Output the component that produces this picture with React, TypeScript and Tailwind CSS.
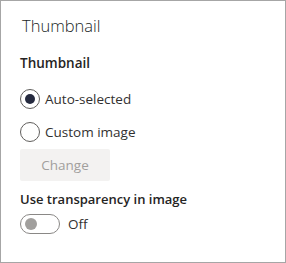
export default function App() {
  return (
    <div className="w-[286px] h-[263px] border border-[#a6a6a6] bg-white text-[#252423]" style={{ fontFamily: '"Open Sans", "Noto Sans", sans-serif' }}>
      <div className="flex flex-col pl-[19px]">
        <div className="h-[22px] mt-[14px] flex items-center pl-[2px] text-[16.5px] font-light text-[#201f1e]">Thumbnail</div>
        <div className="h-[20px] mt-[16px] flex items-center text-[13.5px] font-semibold">Thumbnail</div>
        <label className="h-[22px] mt-[15px] flex items-center gap-[5px] text-[13.5px] text-[#323130]">
          <span className="w-[20px] h-[20px] rounded-full border border-[#605e5c] flex items-center justify-center">
            <span className="w-[10px] h-[10px] rounded-full bg-[#252a3f]" />
          </span>
          Auto-selected
        </label>
        <label className="h-[22px] mt-[11px] flex items-center gap-[5px] text-[13.5px] text-[#323130]">
          <span className="w-[20px] h-[20px] rounded-full border border-[#605e5c]" />
          Custom image
        </label>
        <div className="mt-[6px] w-[90px] h-[32px] rounded-[2px] bg-[#f3f2f1] flex items-center justify-center text-[13.5px] text-[#a19f9d]">Change</div>
        <div className="h-[20px] mt-[9px] flex items-center text-[13px] font-semibold">Use transparency in image</div>
        <div className="h-[22px] mt-[3px] flex items-center gap-[8px] text-[13.5px] text-[#323130]">
          <span className="w-[40px] h-[20px] rounded-full border border-[#8a8886] flex items-center pl-[4px]">
            <span className="w-[12px] h-[12px] rounded-full bg-[#a19f9d]" />
          </span>
          Off
        </div>
      </div>
    </div>
  );
}
